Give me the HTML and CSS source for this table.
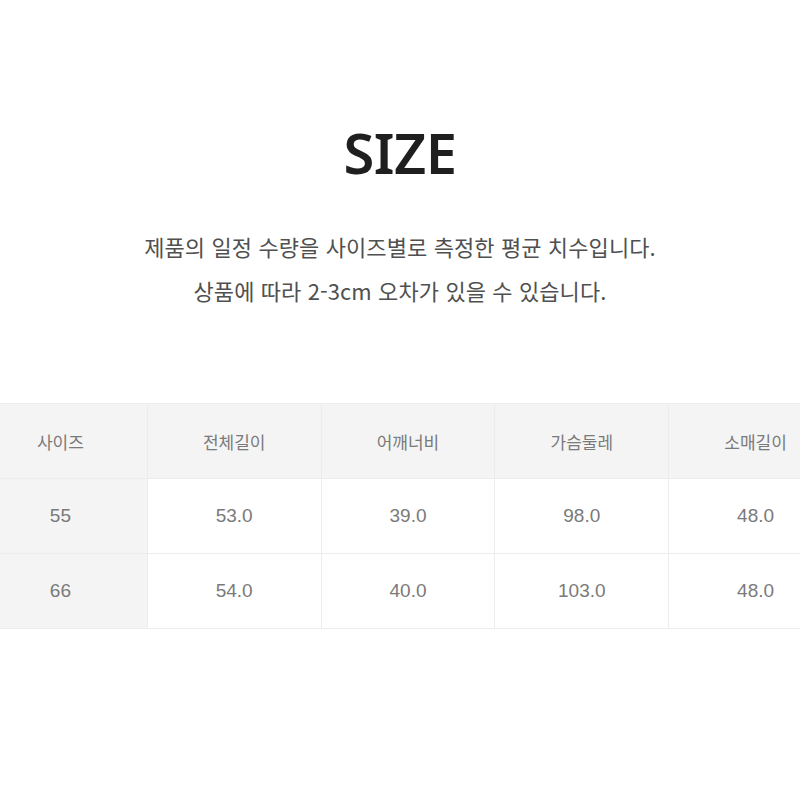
FILE: index.html
```html
<!DOCTYPE html>
<html lang="ko">
<head>
<meta charset="utf-8">
<link rel="stylesheet" href="styles.css">
</head>
<body>
<main class="page">
  <h1 class="title">SIZE</h1>
  <p class="desc">제품의 일정 수량을 사이즈별로 측정한 평균 치수입니다.<br>상품에 따라 2-3cm 오차가 있을 수 있습니다.</p>
  <div class="table-wrap">
    <table class="size-table">
      <thead>
        <tr><th>사이즈</th><th>전체길이</th><th>어깨너비</th><th>가슴둘레</th><th>소매길이</th></tr>
      </thead>
      <tbody>
        <tr><th>55</th><td>53.0</td><td>39.0</td><td>98.0</td><td>48.0</td></tr>
        <tr><th>66</th><td>54.0</td><td>40.0</td><td>103.0</td><td>48.0</td></tr>
      </tbody>
    </table>
  </div>
</main>
</body>
</html>
```
FILE: styles.css
```css
html, body {
  margin: 0;
  padding: 0;
  background: #ffffff;
  overflow: hidden;
}
.page {
  width: 800px;
  height: 800px;
  overflow: hidden;
  font-family: "Noto Sans CJK KR", "Noto Sans", sans-serif;
  color: #777;
}
.title {
  margin: 0;
  padding-top: 116px;
  text-align: center;
  font-family: "Noto Sans", "Noto Sans CJK KR", sans-serif;
  font-weight: 600;
  font-size: 56px;
  line-height: 72px;
  color: #1f1f1f;
  letter-spacing: -0.5px;
}
.desc {
  margin: 36px 0 0;
  text-align: center;
  font-size: 22px;
  line-height: 44px;
  color: #505050;
  letter-spacing: 0.1px;
}
.table-wrap {
  margin-top: 91px;
  margin-left: -27px;
  width: 870px;
}
.size-table {
  width: 870px;
  border-collapse: collapse;
  table-layout: fixed;
}
.size-table th,
.size-table td {
  height: 74px;
  padding: 0;
  text-align: center;
  font-size: 17px;
  font-weight: 400;
  color: #7a7a7a;
  border: 1px solid #ececec;
}
.size-table thead th,
.size-table tbody th {
  background: #f4f4f4;
}
.size-table td {
  background: #fff;
}
.size-table tbody th,
.size-table td {
  font-family: "Liberation Sans", "Noto Sans CJK KR", sans-serif;
  font-size: 19px;
}
```
